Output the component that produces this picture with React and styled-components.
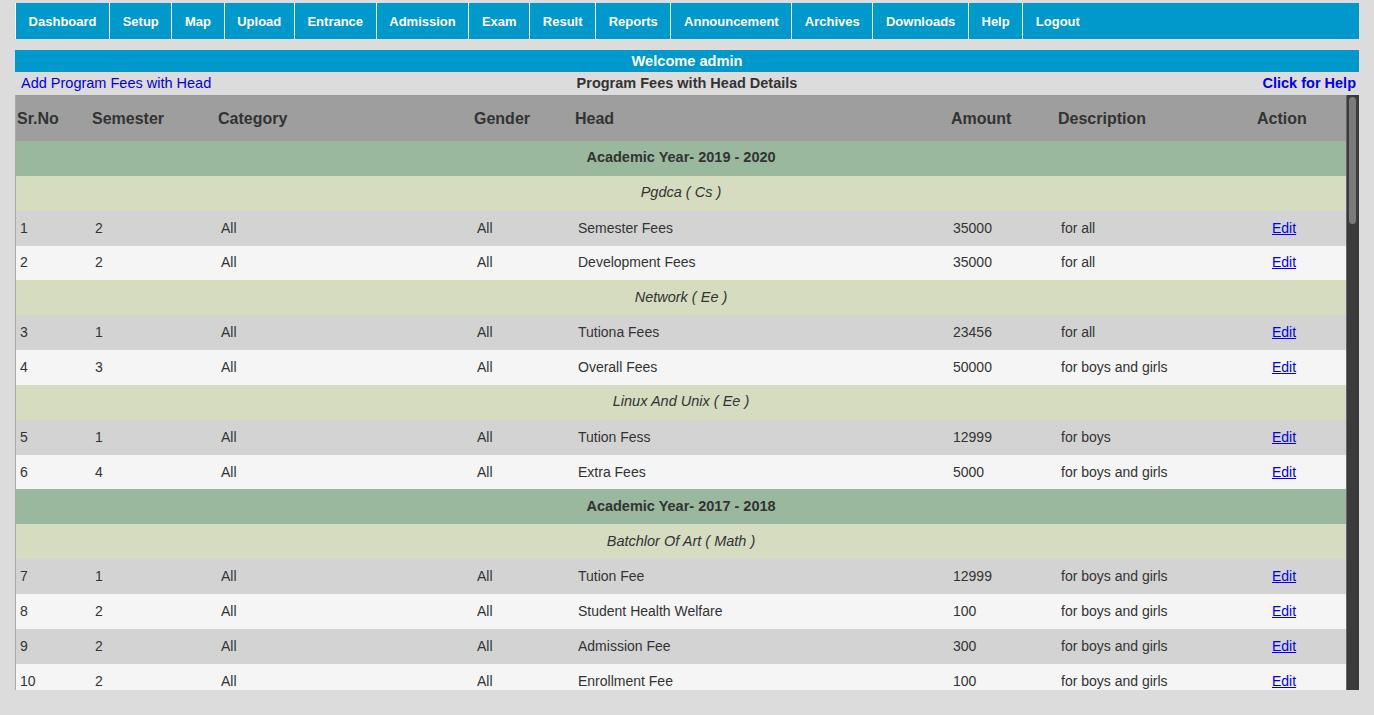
import React from "react";
import styled, { createGlobalStyle } from "styled-components";

const GlobalStyle = createGlobalStyle`
  html, body { margin: 0; padding: 0; background: #dcdcdc; }
  body { font-family: "Liberation Sans", Arial, sans-serif; color: #333; }
`;

const Page = styled.div`
  padding: 3px 15px 0 15px;
  height: 715px;
  box-sizing: border-box;
  display: flex;
  flex-direction: column;
`;

const Nav = styled.nav`
  display: flex;
  height: 36px;
  background: #0099cc;
  margin-bottom: 11px;
`;

const NavItem = styled.a`
  display: flex;
  align-items: center;
  padding: 0 12.6px;
  border-left: 1px solid #fff;
  color: #fff;
  font-weight: bold;
  font-size: 13px;
  text-decoration: none;
`;

const Welcome = styled.div`
  height: 22px;
  background: #0099cc;
  color: #fff;
  font-weight: bold;
  font-size: 14.6px;
  display: flex;
  align-items: center;
  justify-content: center;
`;

const SubHeader = styled.div`
  height: 23px;
  display: grid;
  grid-template-columns: 1fr auto 1fr;
  align-items: center;
  font-size: 14.5px;
  padding-bottom: 1px;
  box-sizing: border-box;
`;

const LinkText = styled.a`
  color: #0000ee;
  text-decoration: none;
  font-weight: ${(p) => (p.$bold ? "bold" : "normal")};
  justify-self: ${(p) => p.$align || "start"};
  padding: ${(p) => (p.$align === "end" ? "0 3px 0 0" : "0 0 0 6px")};
`;

const Title = styled.div`
  font-weight: bold;
  color: #333;
`;

const Frame = styled.div`
  height: 595px;
  display: flex;
`;

const Viewport = styled.div`
  flex: 1;
  overflow: hidden;
  border-top: 1px solid #999;
  border-left: 1px solid #aaa;
  border-right: 1px solid #666;
`;

const ScrollTrack = styled.div`
  width: 12px;
  background: #3b3b3b;
  padding: 2px 3px 0 2px;
  box-sizing: border-box;
`;

const ScrollThumb = styled.div`
  height: 127px;
  background: #7b7b7b;
  border-radius: 4px;
`;

const Table = styled.table`
  width: 100%;
  border-collapse: collapse;
  table-layout: fixed;
  font-size: 14px;
`;

const Th = styled.th`
  height: 45px;
  background: #9e9e9e;
  color: #333;
  font-size: 16px;
  font-weight: bold;
  text-align: left;
  padding: 0 0 0 1px;
  vertical-align: middle;
`;

const GroupCell = styled.td`
  height: 34.85px;
  padding: 0 0 2px 0;
  box-sizing: border-box;
  text-align: center;
  vertical-align: middle;
  font-size: 14.5px;
  background: ${(p) => (p.$kind === "year" ? "#99b89e" : "#d6dcc0")};
  font-weight: ${(p) => (p.$kind === "year" ? "bold" : "normal")};
  font-style: ${(p) => (p.$kind === "year" ? "normal" : "italic")};
  color: #333;
`;

const Row = styled.tr`
  background: ${(p) => (p.$odd ? "#d3d3d3" : "#f5f5f5")};
`;

const Td = styled.td`
  height: 34.85px;
  box-sizing: border-box;
  padding: 0 0 1px ${(p) => p.$pad || 4}px;
  vertical-align: middle;
  color: #333;
  white-space: nowrap;
  overflow: hidden;
`;

const EditLink = styled.a`
  color: #0000ee;
  text-decoration: underline;
`;

const navItems = [
  "Dashboard", "Setup", "Map", "Upload", "Entrance", "Admission", "Exam",
  "Result", "Reports", "Announcement", "Archives", "Downloads", "Help", "Logout",
];

const cols = [75, 126, 256, 101, 376, 107, 199, 79];
const headers = ["Sr.No", "Semester", "Category", "Gender", "Head", "Amount", "Description", "Action"];

const data = [
  { year: "2019 - 2020", programs: [
    { name: "Pgdca ( Cs )", rows: [
      [2, "Semester Fees", 35000, "for all"],
      [2, "Development Fees", 35000, "for all"],
    ]},
    { name: "Network ( Ee )", rows: [
      [1, "Tutiona Fees", 23456, "for all"],
      [3, "Overall Fees", 50000, "for boys and girls"],
    ]},
    { name: "Linux And Unix ( Ee )", rows: [
      [1, "Tution Fess", 12999, "for boys"],
      [4, "Extra Fees", 5000, "for boys and girls"],
    ]},
  ]},
  { year: "2017 - 2018", programs: [
    { name: "Batchlor Of Art ( Math )", rows: [
      [1, "Tution Fee", 12999, "for boys and girls"],
      [2, "Student Health Welfare", 100, "for boys and girls"],
      [2, "Admission Fee", 300, "for boys and girls"],
      [2, "Enrollment Fee", 100, "for boys and girls"],
    ]},
  ]},
];

export default function App() {
  let sr = 0;
  const body = [];
  data.forEach((y) => {
    body.push(
      <tr key={"y" + y.year}>
        <GroupCell colSpan={8} $kind="year">Academic Year- {y.year}</GroupCell>
      </tr>
    );
    y.programs.forEach((p) => {
      body.push(
        <tr key={"p" + y.year + p.name}>
          <GroupCell colSpan={8} $kind="program">{p.name}</GroupCell>
        </tr>
      );
      p.rows.forEach((r, i) => {
        sr += 1;
        body.push(
          <Row key={"r" + sr} $odd={i % 2 === 0}>
            <Td>{sr}</Td>
            <Td>{r[0]}</Td>
            <Td>All</Td>
            <Td>All</Td>
            <Td>{r[1]}</Td>
            <Td $pad={3}>{r[2]}</Td>
            <Td>{r[3]}</Td>
            <Td $pad={16}><EditLink href="#">Edit</EditLink></Td>
          </Row>
        );
      });
    });
  });

  return (
    <>
      <GlobalStyle />
      <Page>
        <Nav>
          {navItems.map((n) => (
            <NavItem key={n} href="#">{n}</NavItem>
          ))}
        </Nav>
        <Welcome>Welcome admin</Welcome>
        <SubHeader>
          <LinkText href="#">Add Program Fees with Head</LinkText>
          <Title>Program Fees with Head Details</Title>
          <LinkText href="#" $bold $align="end">Click for Help</LinkText>
        </SubHeader>
        <Frame>
          <Viewport>
            <Table>
              <colgroup>
                {cols.map((w, i) => (
                  <col key={i} style={i === cols.length - 1 ? undefined : { width: w }} />
                ))}
              </colgroup>
              <thead>
                <tr>
                  {headers.map((h) => (
                    <Th key={h}>{h}</Th>
                  ))}
                </tr>
              </thead>
              <tbody>{body}</tbody>
            </Table>
          </Viewport>
          <ScrollTrack>
            <ScrollThumb />
          </ScrollTrack>
        </Frame>
      </Page>
    </>
  );
}
